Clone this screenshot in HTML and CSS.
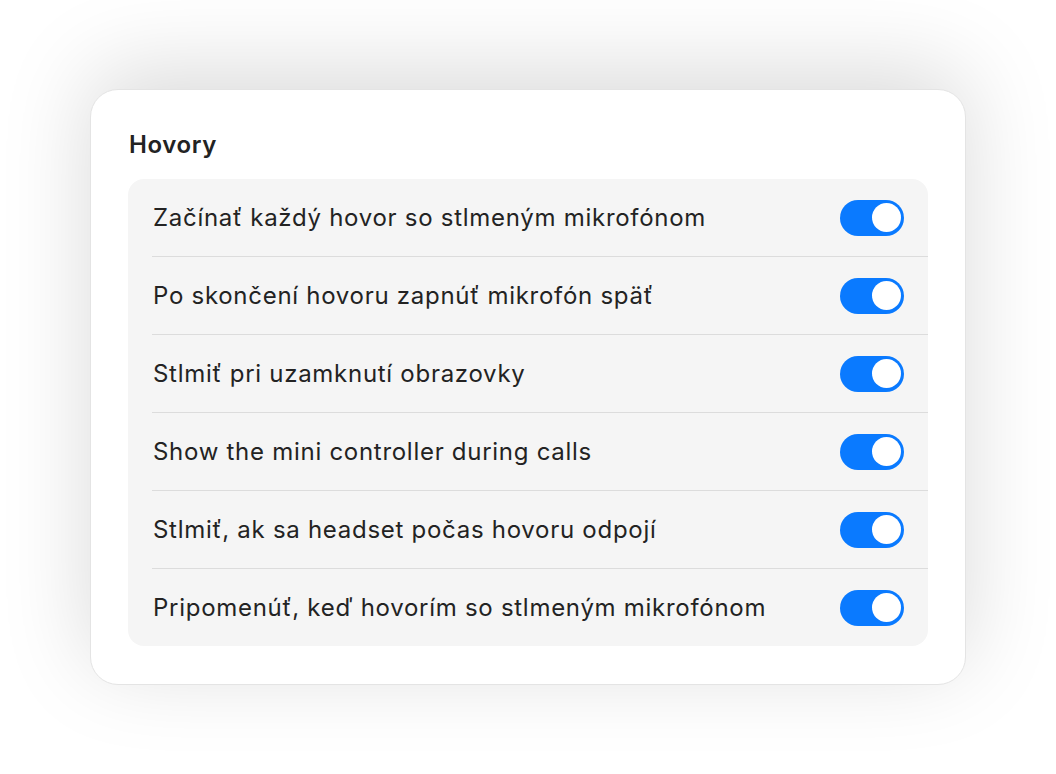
FILE: index.html
```html
<!DOCTYPE html>
<html lang="sk">
<head>
<meta charset="utf-8">
<link rel="stylesheet" href="styles.css">
</head>
<body>
<div class="card">
  <h2 class="title">Hovory</h2>
  <div class="group">
    <div class="row"><span class="label">Začínať každý hovor so stlmeným mikrofónom</span><span class="toggle"><span class="knob"></span></span></div>
    <div class="row"><span class="label">Po skončení hovoru zapnúť mikrofón späť</span><span class="toggle"><span class="knob"></span></span></div>
    <div class="row"><span class="label">Stlmiť pri uzamknutí obrazovky</span><span class="toggle"><span class="knob"></span></span></div>
    <div class="row"><span class="label">Show the mini controller during calls</span><span class="toggle"><span class="knob"></span></span></div>
    <div class="row"><span class="label">Stlmiť, ak sa headset počas hovoru odpojí</span><span class="toggle"><span class="knob"></span></span></div>
    <div class="row"><span class="label">Pripomenúť, keď hovorím so stlmeným mikrofónom</span><span class="toggle"><span class="knob"></span></span></div>
  </div>
</div>
</body>
</html>
```
FILE: styles.css
```css
html, body {
  margin: 0;
  padding: 0;
  background: #ffffff;
}
body {
  width: 1056px;
  height: 774px;
  overflow: hidden;
  font-family: Inter, "Noto Sans", sans-serif;
  color: #232323;
}
.card {
  box-sizing: border-box;
  margin: 89px 0 0 90px;
  width: 876px;
  height: 596px;
  background: #ffffff;
  border: 1px solid #e4e4e4;
  border-radius: 28px;
  box-shadow: 0 -18px 90px rgba(0, 0, 0, 0.15);
  padding: 0 37px 38px 37px;
  display: flex;
  flex-direction: column;
}
.title {
  margin: 37px 0 0 1px;
  height: 53px;
  font-size: 24px;
  font-weight: 600;
  letter-spacing: 0.6px;
  line-height: 36px;
  color: #232323;
}
.group {
  background: #f5f5f5;
  border-radius: 16px;
  display: flex;
  flex-direction: column;
}
.row {
  height: 77px;
  margin-left: 24px;
  padding-right: 24px;
  display: flex;
  align-items: center;
  justify-content: space-between;
  border-bottom: 1px solid #dcdcdc;
}
.row:last-child {
  border-bottom: none;
  height: 77px;
}
.label {
  font-size: 24px;
  letter-spacing: 0.72px;
  color: #232323;
  padding-left: 1px;
}
.toggle {
  box-sizing: border-box;
  width: 64px;
  height: 36px;
  border-radius: 18px;
  background: #0a7aff;
  padding: 3.5px;
  display: flex;
  justify-content: flex-end;
}
.knob {
  width: 29px;
  height: 29px;
  border-radius: 50%;
  background: #ffffff;
}
```
